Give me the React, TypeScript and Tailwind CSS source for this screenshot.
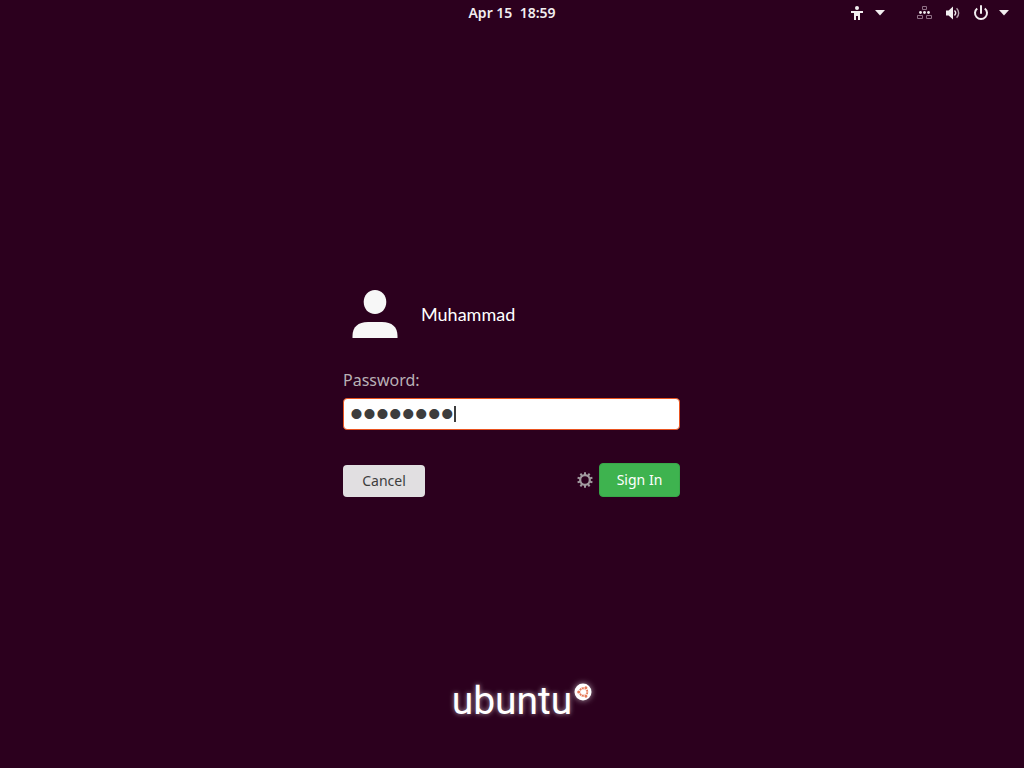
import { useState } from "react";

function CaretDown() {
  return (
    <svg width="10" height="6" viewBox="0 0 10 6" aria-hidden="true">
      <path d="M0 0h10L5 5.5z" fill="#f2eef0" />
    </svg>
  );
}

function AccessibilityIcon() {
  return (
    <svg width="14" height="16" viewBox="0 0 14 16" fill="#f2eef0" aria-hidden="true">
      <circle cx="6" cy="3" r="2" />
      <path d="M0 6h12v2H9v7H7v-4H5v4H3V8H0z" />
    </svg>
  );
}

function NetworkIcon() {
  return (
    <svg width="16" height="16" viewBox="0 0 16 16" aria-hidden="true">
      <g fill="none" stroke="#8f6f85">
        <path d="M5.500 1.5h4v3h-4zM0.500 10.5h5v3h-5zM9.500 10.5h5v3h-5z" />
      </g>
      <g fill="#f2eef0">
        <circle cx="3.500" cy="7.5" r="1.400" />
        <circle cx="7.500" cy="7.5" r="1.400" />
        <circle cx="11.500" cy="7.5" r="1.400" />
      </g>
    </svg>
  );
}

function VolumeIcon() {
  return (
    <svg width="16" height="16" viewBox="0 0 16 16" aria-hidden="true">
      <path d="M1 5.5h2.6L8 1.5v13l-4.4-4H1z" fill="#f2eef0" />
      <path d="M9.5 5.6a3.4 3.4 0 0 1 0 4.8" fill="none" stroke="#f2eef0" strokeWidth="1.4" />
      <path d="M11.6 3.2a6.6 6.6 0 0 1 0 9.6" fill="none" stroke="#b8a6b1" strokeWidth="1.4" />
    </svg>
  );
}

function PowerIcon() {
  return (
    <svg width="16" height="16" viewBox="0 0 16 16" fill="none" stroke="#f2eef0" strokeWidth="2" aria-hidden="true">
      <path d="M4.2 3.4a6 6 0 1 0 7.6 0" />
      <path d="M8 1v7" strokeLinecap="round" />
    </svg>
  );
}

function AvatarIcon() {
  return (
    <svg width="46" height="48" viewBox="0 0 46 48" fill="#f7f7f7" aria-hidden="true">
      <path d="M23 0c6.500 0 11.300 5 11.300 12S29.500 24 23 24s-11.300-5-11.300-12S16.500 0 23 0z" />
      <path d="M0.500 48v-2C0.500 37 6 32 16 32h14c10 0 15.500 5 15.500 14v2z" />
    </svg>
  );
}

const teeth = [0, 36, 72, 108, 144, 180, 216, 252, 288, 324];

function GearIcon() {
  return (
    <svg width="16" height="16" viewBox="0 0 16 16" aria-hidden="true">
      <circle cx="8" cy="8" r="4.800" fill="none" stroke="#a19a9f" strokeWidth="2.200" />
      {teeth.map((angle) => (
        <path key={angle} d="M7 0.200h2v3H7z" fill="#a19a9f" transform={`rotate(${angle} 8 8)`} />
      ))}
    </svg>
  );
}

function CircleOfFriends() {
  return (
    <svg width="18" height="18" viewBox="0 0 18 18" className="drop-shadow-[0_0_3px_#ffffff99]" aria-hidden="true">
      <circle cx="9" cy="9" r="8.500" fill="#fff" />
      <circle cx="9.500" cy="9" r="3.800" fill="none" stroke="#e67a58" strokeWidth="2" />
      {[60, 180, 300].map((angle) => (
        <g key={angle} transform={`rotate(${angle} 9.500 9)`}>
          <circle cx="14.300" cy="9" r="2.200" fill="#fff" />
          <circle cx="14.300" cy="9" r="1.500" fill="#e67a58" />
        </g>
      ))}
      {[0, 120, 240].map((angle) => (
        <path key={angle} d="M11.500 9h3.500" stroke="#fff" strokeWidth="0.600" transform={`rotate(${angle} 9.500 9)`} />
      ))}
    </svg>
  );
}

export default function App() {
  const [password, setPassword] = useState("password");

  return (
    <div className="flex min-h-screen flex-col bg-[#2c001e] font-['Noto_Sans',sans-serif]">
      <header className="grid h-[26px] grid-cols-[1fr_auto_1fr] items-center px-[15px] text-[#f2eef0]">
        <time className="col-start-2 whitespace-pre text-sm font-semibold">Apr 15  18:59</time>
        <div className="flex items-center justify-end gap-8">
          <button type="button" aria-label="Accessibility" className="flex items-center gap-2.5">
            <AccessibilityIcon />
            <CaretDown />
          </button>
          <button type="button" aria-label="System menu" className="flex items-center gap-2.5">
            <span className="flex items-center gap-3">
              <NetworkIcon />
              <VolumeIcon />
              <PowerIcon />
            </span>
            <CaretDown />
          </button>
        </div>
      </header>

      <main className="flex flex-1 items-center justify-center pr-px pt-[78px]">
        <form className="w-[337px]" onSubmit={(event) => event.preventDefault()}>
          <div className="flex items-center gap-[23px] pl-[9px]">
            <AvatarIcon />
            <h1 className="font-['Lato',sans-serif] text-lg text-white">Muhammad</h1>
          </div>

          <label htmlFor="password" className="mt-8 block text-base leading-5 text-[#b9b1b6]">
            Password:
          </label>
          <div className="relative mt-2">
            <input
              id="password"
              type="password"
              value={password}
              onChange={(event) => setPassword(event.target.value)}
              className="block h-8 w-full rounded border border-[#e95420] bg-white px-1.5 font-['Liberation_Sans',sans-serif] text-[37px] leading-7 text-[#3d3d3d] caret-transparent outline-none"
            />
            <span className="absolute left-[111px] top-2 h-4 w-0.5 bg-[#3d3d3d]" />
          </div>

          <div className="mt-[33px] flex items-end">
            <button type="button" className="h-8 w-[82px] rounded bg-[#e1dfe1] text-sm text-[#3d3d3d]">
              Cancel
            </button>
            <button type="button" aria-label="Session options" className="mb-[9px] ml-auto mr-1.5">
              <GearIcon />
            </button>
            <button type="submit" className="h-[34px] w-[81px] rounded border border-[#38a749] bg-[#3eb34f] text-sm text-white">
              Sign In
            </button>
          </div>
        </form>
      </main>

      <footer className="flex items-start justify-center gap-0.5 pb-[49px] pl-5">
        <span className="font-['Roboto',sans-serif] text-[39px] leading-9 text-white [text-shadow:0_0_5px_#ffffff99]">
          ubuntu
        </span>
        <CircleOfFriends />
      </footer>
    </div>
  );
}
